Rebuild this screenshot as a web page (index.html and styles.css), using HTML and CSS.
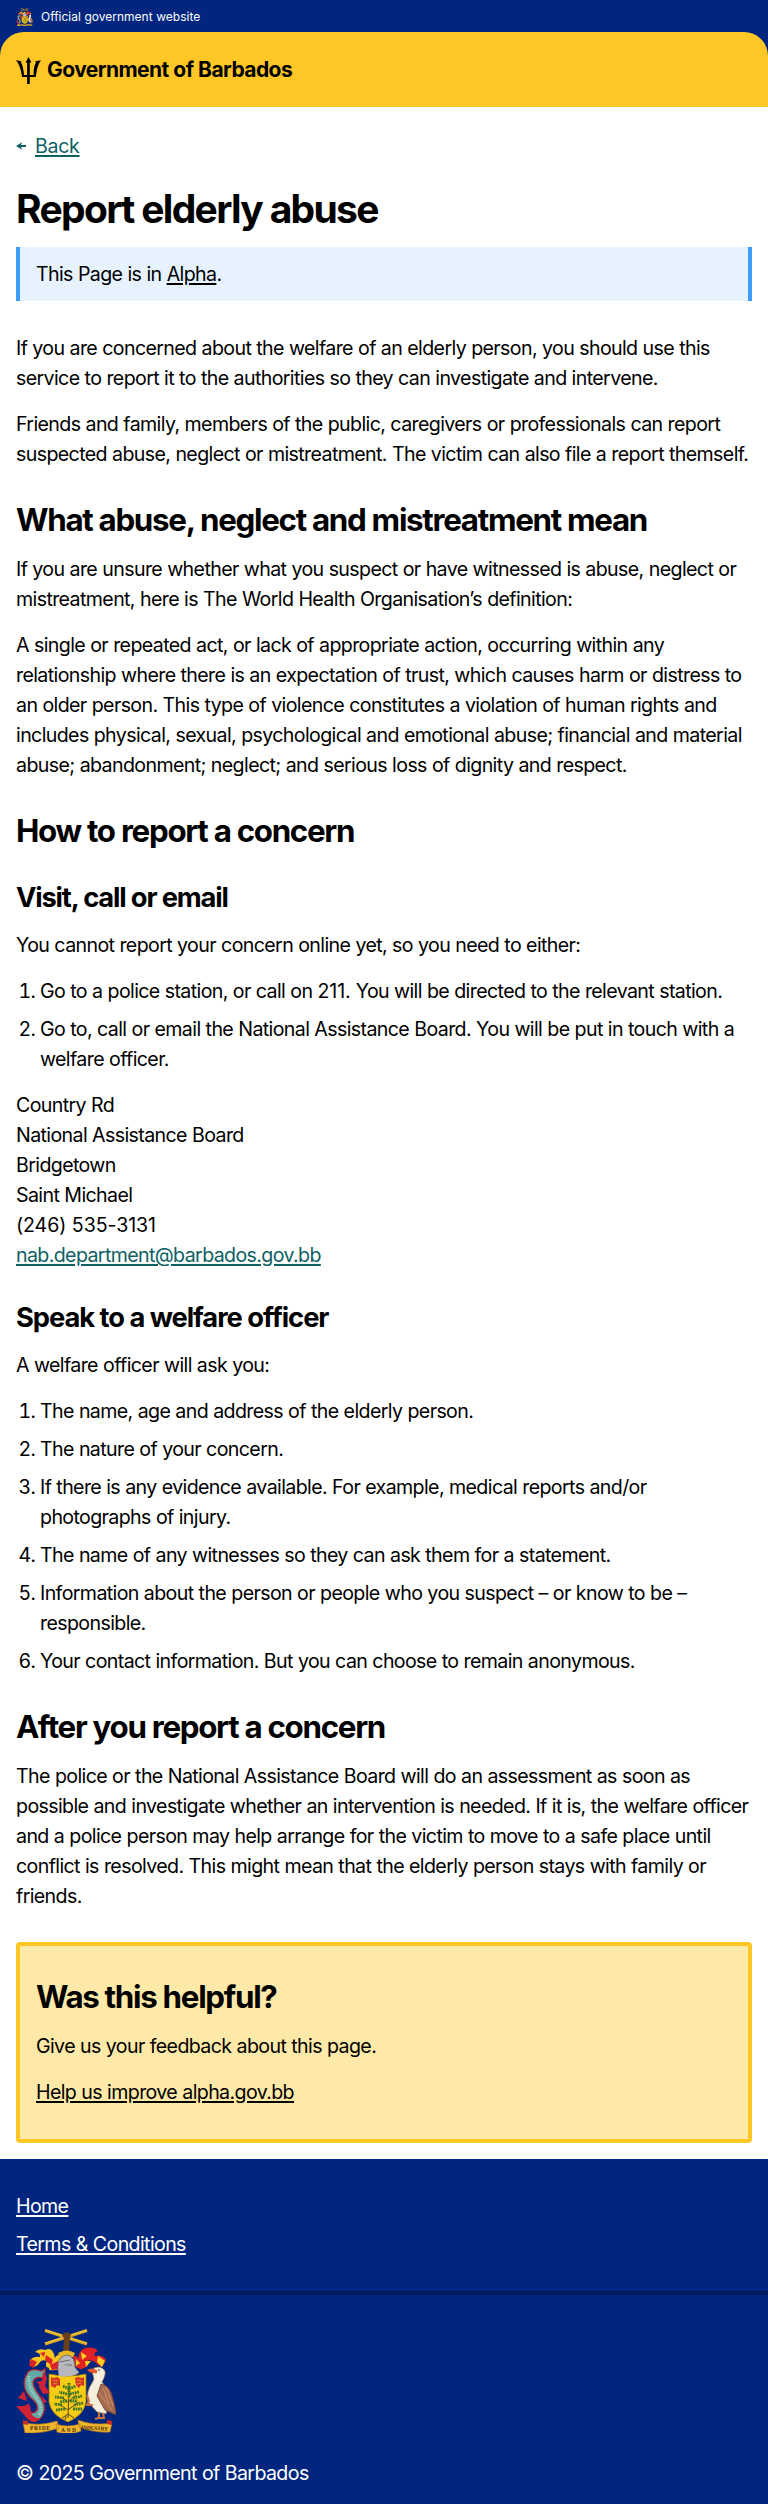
FILE: index.html
```html
<!DOCTYPE html>
<html lang="en">
<head>
<meta charset="utf-8">
<title>Report elderly abuse</title>
<link rel="stylesheet" href="styles.css">
</head>
<body>
<div class="official"><svg class="mini" viewBox="0 0 100 105"><use href="#arms"/></svg><span>Official government website</span></div>
<header class="masthead-wrap"><div class="masthead">
  <svg class="trident" viewBox="0 0 25 27"><path d="M12.500 0l3 5.500h-1.700V18h3.900C17.200 13 18.500 7.700 20.100 5l-1-.8L25 3.200C21.900 7.200 20.700 13.200 19.800 20h-6v7h-2.700v-7H6C5.100 13 3.500 7.200 0 3.300l5.800.9-1 .8C6.700 8 7.700 13 8.100 18h3V5.500H9.500z"/></svg>
  <span class="brand">Government of Barbados</span>
</div></header>
<main class="content">
  <nav class="back"><svg viewBox="0 0 10 8"><path d="M0 4 6 .3 5 3h5v2H5l1 2.700z"/></svg><a href="#">Back</a></nav>
  <h1>Report elderly abuse</h1>
  <div class="alpha">This Page is in <a href="#">Alpha</a>.</div>
  <p>If you are concerned about the welfare of an elderly person, you should use this<br>service to report it to the authorities so they can investigate and intervene.</p>
  <p>Friends and family, members of the public, caregivers or professionals can report<br>suspected abuse, neglect or mistreatment. The victim can also file a report themself.</p>
  <h2>What abuse, neglect and mistreatment mean</h2>
  <p>If you are unsure whether what you suspect or have witnessed is abuse, neglect or<br>mistreatment, here is The World Health Organisation’s definition:</p>
  <p>A single or repeated act, or lack of appropriate action, occurring within any<br>relationship where there is an expectation of trust, which causes harm or distress to<br>an older person. This type of violence constitutes a violation of human rights and<br>includes physical, sexual, psychological and emotional abuse; financial and material<br>abuse; abandonment; neglect; and serious loss of dignity and respect.</p>
  <h2>How to report a concern</h2>
  <h3>Visit, call or email</h3>
  <p>You cannot report your concern online yet, so you need to either:</p>
  <ol>
    <li>Go to a police station, or call on <span class="number">211.</span> You will be directed to the relevant station.</li>
    <li>Go to, call or email the National Assistance Board. You will be put in touch with a<br>welfare officer.</li>
  </ol>
  <p>Country Rd<br>National Assistance Board<br>Bridgetown<br>Saint Michael<br><span class="number">(246) 535-3131</span><br><a class="mail" href="#">nab.department@barbados.gov.bb</a></p>
  <h3>Speak to a welfare officer</h3>
  <p>A welfare officer will ask you:</p>
  <ol>
    <li>The name, age and address of the elderly person.</li>
    <li>The nature of your concern.</li>
    <li>If there is any evidence available. For example, medical reports and/or<br>photographs of injury.</li>
    <li>The name of any witnesses so they can ask them for a statement.</li>
    <li>Information about the person or people who you suspect – or know to be –<br>responsible.</li>
    <li>Your contact information. But you can choose to remain anonymous.</li>
  </ol>
  <h2>After you report a concern</h2>
  <p>The police or the National Assistance Board will do an assessment as soon as<br>possible and investigate whether an intervention is needed. If it is, the welfare officer<br>and a police person may help arrange for the victim to move to a safe place until<br>conflict is resolved. This might mean that the elderly person stays with family or<br>friends.</p>
  <section class="feedback">
    <h2>Was this helpful?</h2>
    <p>Give us your feedback about this page.</p>
    <p><a href="#">Help us improve alpha.gov.bb</a></p>
  </section>
</main>
<footer>
  <nav class="links"><a href="#">Home</a><a href="#">Terms &amp; Conditions</a></nav>
  <div class="legal">
    <svg class="crest" viewBox="0 0 100 105">
      <g id="arms">
        <path d="M29 2.500 71 16M71 2.500 29 16" stroke="#d9a526" stroke-width="3.200" fill="none"/>
        <path d="M29 2 71 15.200M71 2 29 15.200" stroke="#f7cf42" stroke-width="1" fill="none"/>
        <path d="M46 7q4-5 9-1l-1 5-1 13h-6l1-13z" fill="#6b3f1d"/>
        <!-- mantling -->
        <path d="M48 28Q42 24 39 30Q37 18 29 22Q23 20 19 24Q25 25 24 29Q18 28 14 32Q13 36 17 39Q22 38 24 34Q26 31 31 33Q28 39 33 40Q32 44 44 41z" fill="#f8c51b"/>
        <path d="M57 28Q61 27 62 31Q63 22 69 20Q78 18 82 23Q77 25 79 28Q87 26 90 32L86 39Q81 37 79 34Q74 31 71 33Q73 39 68 40Q64 43 59 38z" fill="#e12225"/>
        <path d="M15 31l6 3-4 6-4-3zM30 27l7 5-2 5-6-5zM24 25l5-1-1 5zM34 37l8-4v8l-6 1z" fill="#dc2027"/>
        <path d="M65 24l6 4-5 4zM82 28l7 5-3 6-5-5zM69 33l6 0-5 6zM60 31l4 4-4 3z" fill="#ffcc22"/>
        <path d="M42 25q9-5 17 0l-2 4H44z" fill="#e8b920"/>
        <path d="M42 38q0-10 9-11 8 1 8 12l4 6q-12 7-20 3z" fill="#b7b8bd" stroke="#5c5e65" stroke-width=".8"/>
        <path d="M44 34l10-2M48 37l8 0M45 44q8 2 15-2" stroke="#696c73" fill="none"/>
        <!-- shield and fig tree -->
        <path d="M33 46q19 4 37 0v28Q68 87 52 94 35 87 33 74Z" fill="#f8cb15" stroke="#9a7814" stroke-width=".8"/>
        <path d="M42 38l8-1 8 3 5 4q-9 6-20 4z" fill="#b7b8bd"/>
        <path d="M35 49l3 1 3-1 3 2v7l-3-1-2 3-4-2zM59 50l3-1 4 1 2-1v9l-3-1-2 3-3-3z" fill="#d63625"/>
        <path d="M37 52l5 1M37 56l4-1M61 52l5 1M61 56l4-1" stroke="#e9a126" stroke-width=".8"/>
        <path d="M53 62l-1 28M52 82l-9-6M53 81l10-7M52 74l-7-5M53 73l7-6M52 86l-6 4M52 86l6 4M50 88l-1 4" stroke="#594515" stroke-width="1" fill="none"/>
        <g fill="none" stroke="#357328" stroke-width="2.800" stroke-dasharray="1.800 .7"><path d="M53 55v14M53 61l-6-3M53 61l7-3M51 66l-8-2M54 66l9-2M48 70l-9-1M57 70l9-2M51 73l-7 1M54 73l7 0M46 77l-8-1M58 77l9-2M49 81l-9 1M57 81l9 0"/></g>
        <!-- dolphin -->
        <path d="M12 44Q16 40 25 43L29 41 29 46 26 50Q19 48 17 54 17 59 23 67 32 79 26 88 20 98 10 87L3 79Q8 81 10 79 16 89 21 82 23 76 14 69 6 60 9 50Z" fill="#62aaa8" stroke="#b22430" stroke-width="1.300"/>
        <path d="M27 43l4 7-2 8 5 7-7 1-5-9 3 1-5-4 6-1zM8 63l-6 7 9 3zM0 78q9 1 13-3l3 12q6 6 10 1-8 12-17 0zM25 67l6 7-3 1z" fill="#cf2335"/>
        <path d="M13 48q-1 8 3 15l7 11q4 8 0 13" stroke="#a9d3ca" stroke-width="3" stroke-dasharray="1.200 1.200" fill="none"/>
        <!-- pelican -->
        <path d="M89 43q-4-6-11-3-3 3-1 7 2 4-1 8-6 8-4 19l9 10 9 2 5-20-9-12q4-7 3-11z" fill="#f5eedc" stroke="#89704c" stroke-width=".7"/>
        <path d="M81 42q-6-3-10 0 4 4 10 3z" fill="#e45a31"/>
        <circle cx="83" cy="42" r=".8" fill="#222"/>
        <path d="M85 56q9 1 12 15 3 10 3 16l-11-5-8-14z" fill="#a76b4f" stroke="#6e3c2c" stroke-width=".8"/>
        <path d="M87 60l6 16M90 59l7 19M83 65l13 17" stroke="#d69c78" stroke-width=".8"/>
        <path d="M83 84v6l-4 1M87 85l1 5-4 0M71 67l2 6-2 4 6 0" stroke="#cc7340" stroke-width="2" fill="none"/>
        <!-- ribbon -->
        <path d="M7 94q14 5 34-1l2 7q-17 6-34 5zM40 96q11 4 24 0l1 7q-13 5-24 1zM62 92q15 6 34 3l-2 9q-16 1-31-5z" fill="#efb52d" stroke="#b97b18" stroke-width=".7"/>
        <path d="M7 92l5 1v4l-5-1zM91 92l5 1v4l-5-1z" fill="#c52c25"/>
      </g>
      <g class="motto"><text x="14" y="102" textLength="20">PRIDE</text><text x="45" y="104" textLength="15">AND</text><text x="65" y="101" textLength="27" transform="rotate(4 65 101)">INDUSTRY</text></g>
    </svg>
    <div>© 2025 Government of Barbados</div>
  </div>
</footer>
</body>
</html>
```
FILE: styles.css
```css
* { box-sizing: border-box; }
body { margin: 0; background: #fff; color: #000; font: 19.6px/30px Inter, "Liberation Sans", sans-serif; letter-spacing: -.62px; word-spacing: .2px; }
a { color: inherit; text-decoration: underline; text-decoration-thickness: 2px; text-underline-offset: 2px; }
.official { display: flex; align-items: center; gap: 8px; height: 32px; padding: 2px 16px 0; background: #00267f; color: #fff; font-size: 12px; letter-spacing: 0; }
.mini { width: 17px; height: 18px; }
.motto { font: bold 5.5px "Liberation Serif", serif; letter-spacing: 0; fill: #4a2b10; }
.masthead-wrap { background: #00267f; }
.masthead { display: flex; align-items: center; gap: 6px; height: 75px; padding: 1px 16px 0; background: #ffc726; border-radius: 24px 24px 0 0; }
.trident { width: 25px; height: 27px; }
.brand { font-size: 21px; font-weight: 700; letter-spacing: -.55px; white-space: nowrap; }
.content { padding: 24px 16px 16px; }
.back { display: flex; align-items: center; gap: 9px; color: #0e5f64; }
.back a { letter-spacing: -.3px; }
.back svg { width: 10px; height: 8px; fill: currentColor; }
h1, h2, h3, p, ol { margin: 0; white-space: nowrap; }
h1, h2, h3 { word-spacing: 0; }
h1 { margin-top: 24px; font-size: 39px; line-height: 48px; letter-spacing: -1.680px; }
.alpha { margin: 14px 0 32px; height: 54px; padding: 12px 16px; border: solid #3f9cff; border-width: 0 4px; background: #e6f3ff; }
p, ol { margin-bottom: 16px; }
h2 { margin: 31px 0 14px; font-size: 31.3px; line-height: 40px; letter-spacing: -1.290px; }
h3 { margin: 30px 0 14px; font-size: 27.3px; line-height: 36px; letter-spacing: -1.030px; }
h2 + h3 { margin: 29px 0 14px; letter-spacing: -1.150px; }
ol { padding-left: 24px; }
li + li { margin-top: 8px; }
.number { letter-spacing: -.1px; }
.mail { color: #0e5f64; }
.feedback { margin-top: 31px; height: 201px; padding: 0 16px; border: 4px solid #ffc726; border-radius: 4px; background: #ffe9a8; }
footer { background: #00267f; color: #fff; }
.links { display: flex; flex-direction: column; align-items: flex-start; gap: 8px; height: 136px; padding: 32px 16px; border-bottom: 4px solid #001a5c; }
.legal { height: 209px; padding: 33px 16px 0; }
.crest { display: block; width: 100px; height: 105px; margin-bottom: 25px; }
```
